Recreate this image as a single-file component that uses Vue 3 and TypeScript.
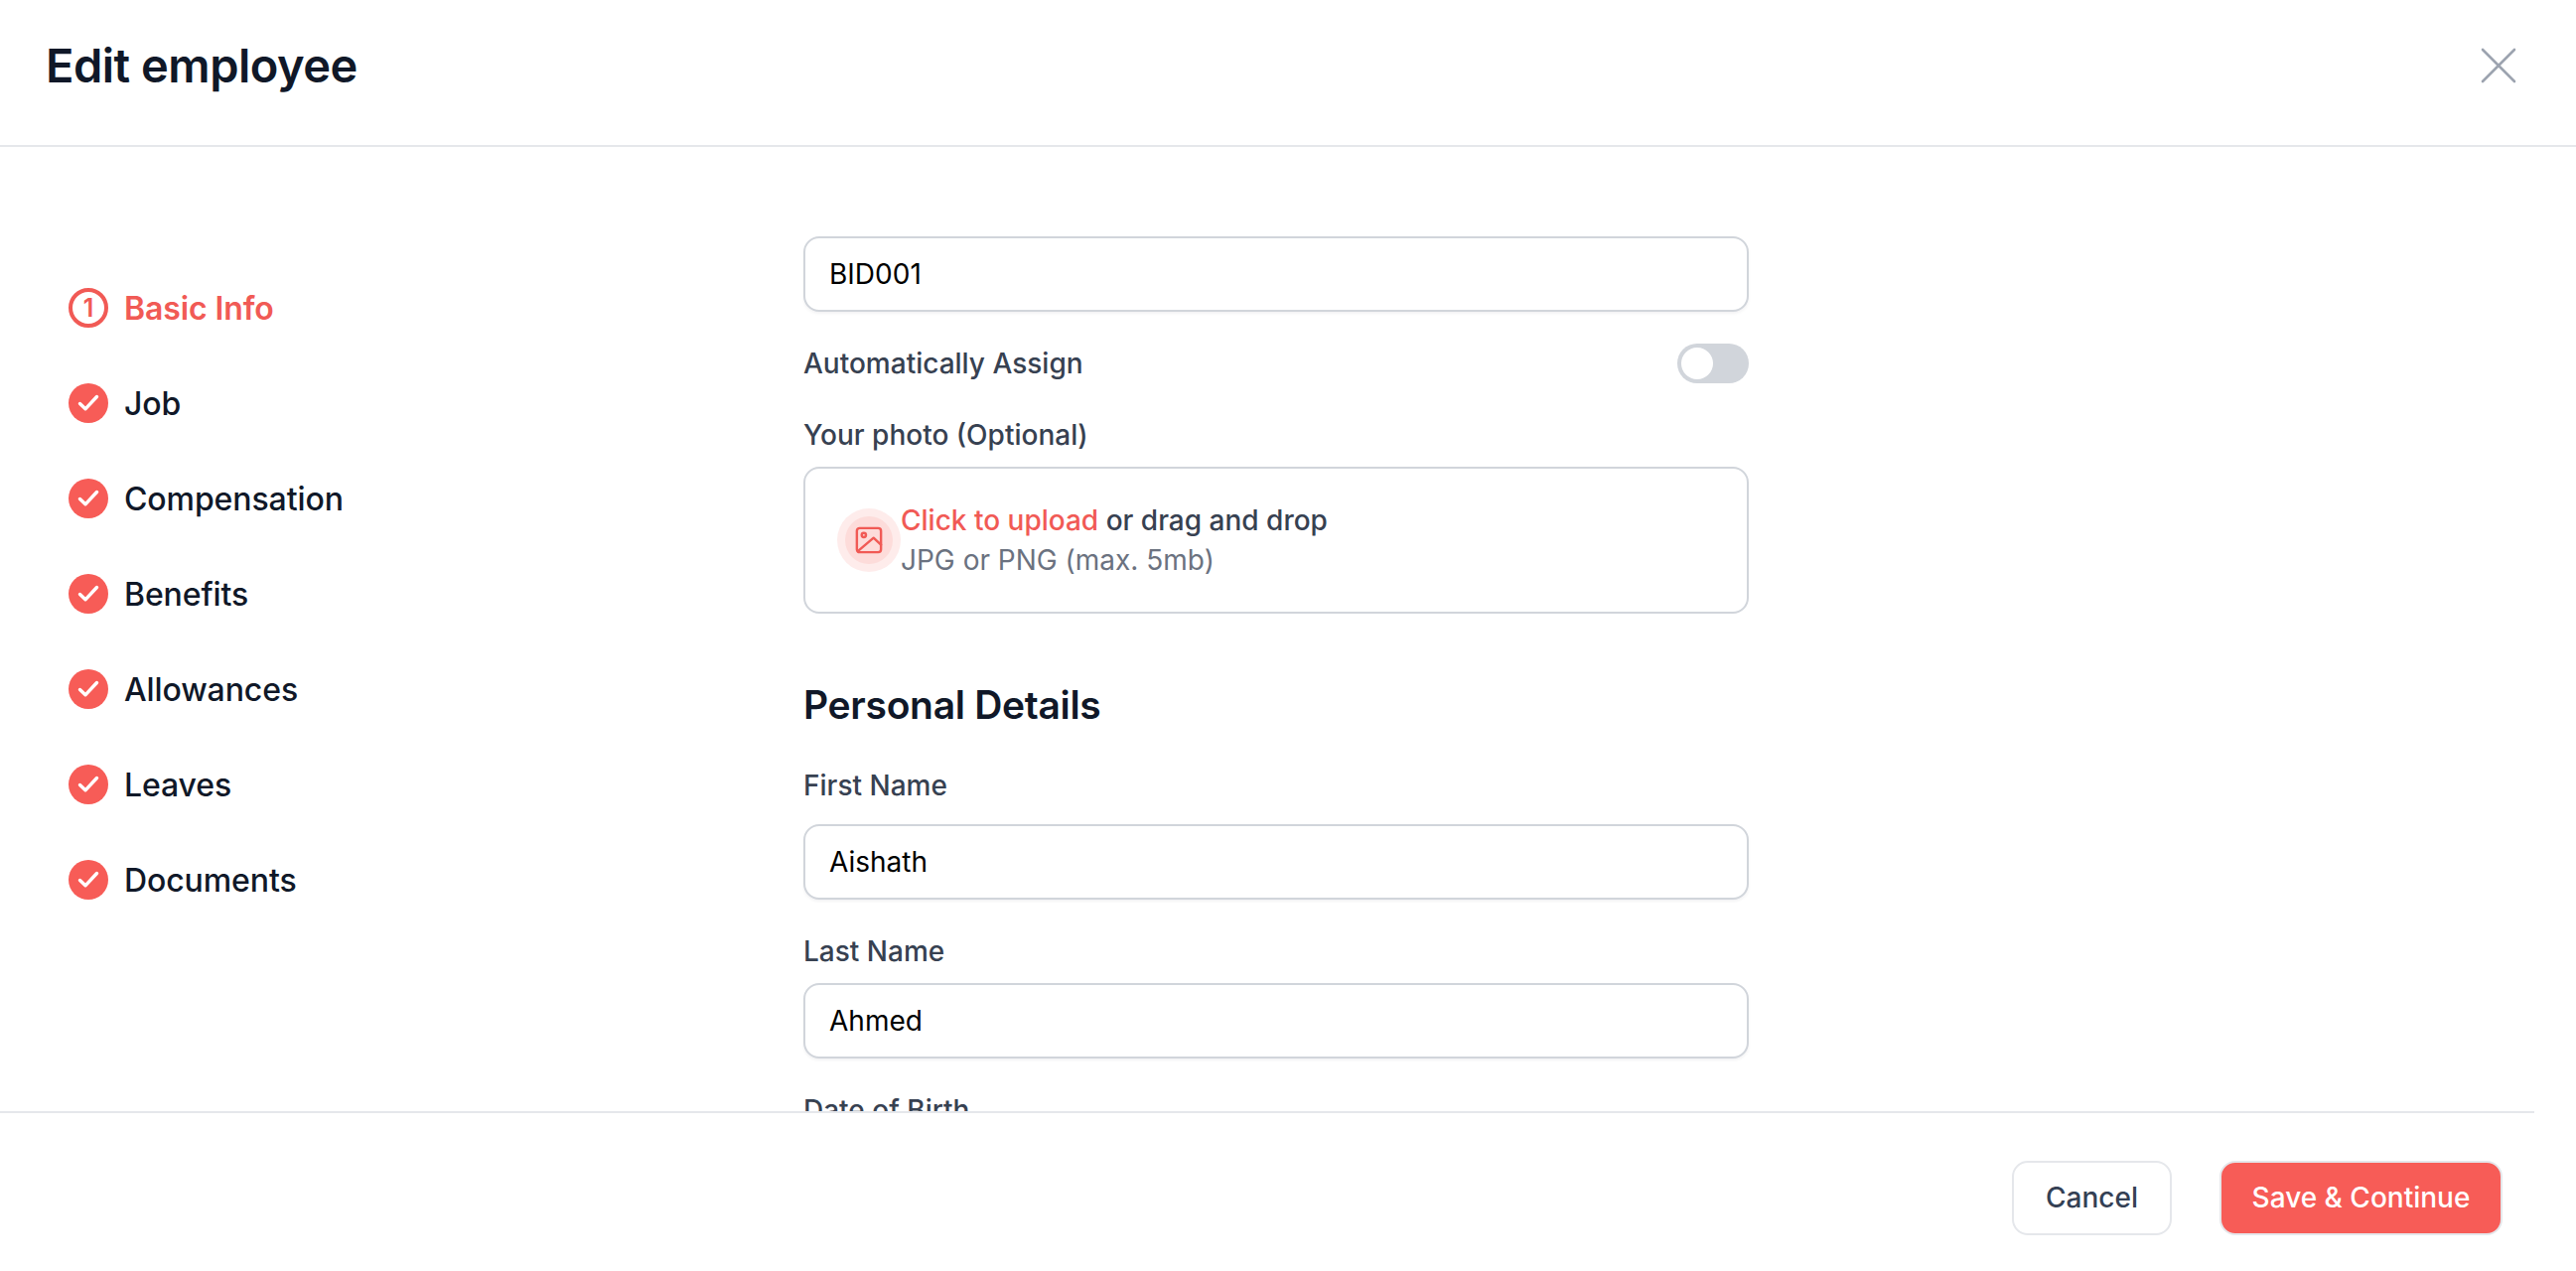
<template>
  <div class="page">
    <header class="top-bar">
      <h1>Edit employee</h1>
      <button class="close-btn" type="button" aria-label="Close">
        <svg width="40" height="40" viewBox="0 0 40 40" fill="none">
          <path d="M4 4L36 36M36 4L4 36" stroke="#9ca3af" stroke-width="2.6" stroke-linecap="round" />
        </svg>
      </button>
    </header>

    <main class="content">
      <nav class="steps">
        <div v-for="(step, i) in steps" :key="step" class="step" :class="{ active: i === 0 }">
          <span v-if="i === 0" class="step-num">1</span>
          <svg v-else class="step-check" width="40" height="40" viewBox="0 0 40 40">
            <circle cx="20" cy="20" r="20" fill="#f75c57" />
            <path d="M11.5 20.5L17 25.8L28.5 13.5" fill="none" stroke="#fff" stroke-width="3.4" stroke-linecap="round" stroke-linejoin="round" />
          </svg>
          <span>{{ step }}</span>
        </div>
      </nav>

      <form class="form" @submit.prevent>
        <input class="text-input" type="text" value="BID001" />

        <div class="toggle-row">
          <label>Automatically Assign</label>
          <span class="toggle"><span class="knob"></span></span>
        </div>

        <label class="photo-label">Your photo (Optional)</label>
        <div class="upload">
          <span class="upload-icon">
            <span class="upload-icon-inner">
              <svg width="28" height="28" viewBox="0 0 30 30" fill="none" stroke="#f15a55" stroke-width="2.6" stroke-linecap="round" stroke-linejoin="round">
                <rect x="2" y="2" width="26" height="26" rx="3" />
                <circle cx="9.5" cy="9.5" r="2.3" />
                <path d="M3 27L20 12.5L28 20" />
              </svg>
            </span>
          </span>
          <div class="upload-text">
            <div class="upload-main"><span class="link">Click to upload</span> or drag and drop</div>
            <div class="upload-sub">JPG or PNG (max. 5mb)</div>
          </div>
        </div>

        <h2>Personal Details</h2>

        <label class="field-label">First Name</label>
        <input class="text-input" type="text" value="Aishath" />

        <label class="field-label second">Last Name</label>
        <input class="text-input" type="text" value="Ahmed" />

        <label class="field-label second">Date of Birth</label>
      </form>
    </main>

    <footer class="bottom-bar">
      <button class="btn cancel" type="button">Cancel</button>
      <button class="btn save" type="button">Save &amp; Continue</button>
    </footer>
  </div>
</template>

<script setup lang="ts">
const steps: string[] = [
  'Basic Info',
  'Job',
  'Compensation',
  'Benefits',
  'Allowances',
  'Leaves',
  'Documents'
];
</script>

<style>
html,
body {
  margin: 0;
  background: #fff;
}
</style>

<style scoped>
.page {
  display: flex;
  flex-direction: column;
  height: 1280px;
  overflow: hidden;
  background: #fff;
  font-family: Inter, "Noto Sans", sans-serif;
  color: #101828;
}

.top-bar {
  display: flex;
  align-items: center;
  justify-content: space-between;
  flex: none;
  height: 132px;
  padding: 0 58px 14px 46px;
  border-bottom: 2px solid #e5e7eb;
}

.top-bar h1 {
  margin: 0;
  font-size: 47px;
  font-weight: 600;
  letter-spacing: -0.5px;
  line-height: 60px;
}

.close-btn {
  display: flex;
  padding: 0;
  border: 0;
  background: none;
}

.content {
  display: flex;
  flex: 1;
  min-height: 0;
  overflow: hidden;
}

.steps {
  display: flex;
  flex-direction: column;
  gap: 56px;
  flex: none;
  width: 740px;
  padding: 142px 0 0 69px;
}

.step {
  display: flex;
  align-items: center;
  gap: 16px;
  height: 40px;
  font-size: 32px;
  font-weight: 500;
  letter-spacing: -0.1px;
}

.step.active {
  color: #f15a55;
  font-weight: 600;
}

.step-num {
  display: flex;
  align-items: center;
  justify-content: center;
  box-sizing: border-box;
  width: 40px;
  height: 40px;
  border: 4px solid #f15a55;
  border-radius: 50%;
  font-size: 25px;
  font-weight: 600;
}

.step-check {
  flex: none;
}

.form {
  display: flex;
  flex-direction: column;
  flex: none;
  width: 952px;
  padding-top: 90px;
}

.form > * {
  flex: none;
}

.text-input {
  box-sizing: border-box;
  width: 100%;
  height: 76px;
  padding: 0 24px;
  border: 2px solid #d1d5db;
  border-radius: 16px;
  outline: none;
  background: #fff;
  box-shadow: 0 2px 3px rgba(16, 24, 40, 0.05);
  font-family: inherit;
  font-size: 28px;
  color: #000;
}

label {
  font-size: 28px;
  line-height: 40px;
  font-weight: 500;
  color: #374151;
}

.toggle-row {
  display: flex;
  align-items: center;
  justify-content: space-between;
  margin-top: 32px;
}

.toggle {
  display: flex;
  align-items: center;
  box-sizing: border-box;
  width: 72px;
  height: 40px;
  padding: 4px;
  border-radius: 20px;
  background: #d1d5db;
}

.knob {
  width: 32px;
  height: 32px;
  border-radius: 50%;
  background: #fff;
}

.photo-label {
  margin-top: 32px;
}

.upload {
  display: flex;
  align-items: center;
  box-sizing: border-box;
  height: 148px;
  margin-top: 12px;
  padding: 0 32px;
  border: 2px solid #d1d5db;
  border-radius: 16px;
}

.upload-icon {
  display: flex;
  align-items: center;
  justify-content: center;
  flex: none;
  width: 64px;
  height: 64px;
  border-radius: 50%;
  background: #feeceb;
}

.upload-icon-inner {
  display: flex;
  align-items: center;
  justify-content: center;
  width: 48px;
  height: 48px;
  border-radius: 50%;
  background: #fddcda;
}

.upload-text {
  font-size: 28px;
  line-height: 40px;
}

.upload-main {
  font-weight: 500;
  color: #374151;
}

.link {
  color: #f15a55;
}

.upload-sub {
  color: #6b7280;
}

h2 {
  margin: 66px 0 0;
  font-size: 39px;
  font-weight: 600;
  letter-spacing: -0.3px;
  line-height: 52px;
}

.field-label {
  margin-top: 35px;
  margin-bottom: 19px;
}

.field-label.second {
  margin-top: 32px;
  margin-bottom: 12px;
}

.bottom-bar {
  display: flex;
  align-items: center;
  justify-content: flex-end;
  gap: 48px;
  flex: none;
  box-sizing: border-box;
  width: 2552px;
  height: 161px;
  padding: 11px 32px 0 0;
  border-top: 2px solid #e5e7eb;
}

.btn {
  box-sizing: border-box;
  height: 75px;
  border: 2px solid #e5e7eb;
  border-radius: 16px;
  font-family: inherit;
  font-size: 28px;
  font-weight: 500;
}

.cancel {
  width: 161px;
  background: #fff;
  color: #344054;
}

.save {
  width: 285px;
  background: #f75c57;
  color: #fff;
}
</style>
